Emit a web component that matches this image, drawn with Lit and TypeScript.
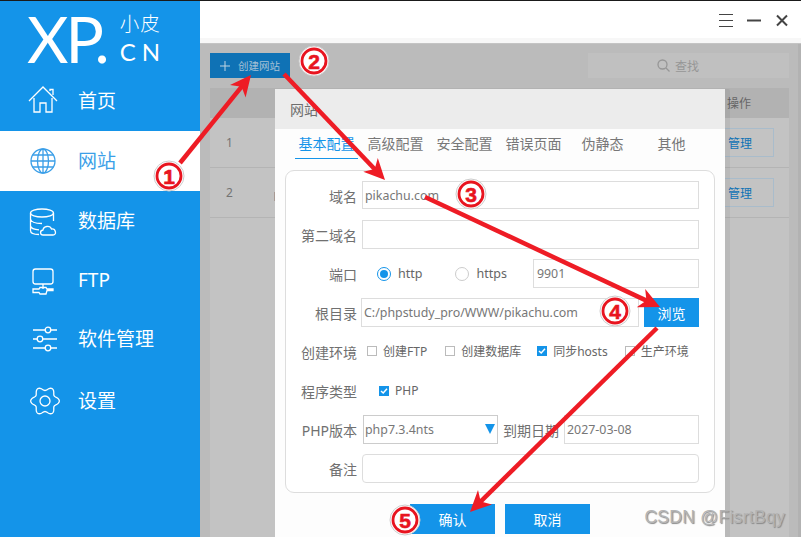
import { LitElement, html, css, svg } from "lit";
import { customElement } from "lit/decorators.js";

const gearPath = (() => {
  const pts: string[] = [];
  for (let i = 0; i < 120; i++) {
    const t = (i / 120) * Math.PI * 2;
    const r = 12.4 + 1.9 * Math.cos(6 * t);
    pts.push(`${(17 + r * Math.cos(t)).toFixed(2)} ${(15 + r * Math.sin(t)).toFixed(2)}`);
  }
  return "M" + pts.join("L") + "Z";
})();

const icons: Record<string, unknown> = {
  home: svg`<path d="M1 15 15 1 29 15M22 5V3.500h3V9M6 12V26H12V17H18V26H24V12"/>`,
  globe: svg`<circle cx="15" cy="15" r="12"/><ellipse cx="15" cy="15" rx="5.500" ry="12"/><path d="M15 3V27M3 15H27M4.500 9H25.500M4.500 21H25.500"/>`,
  db: svg`<ellipse cx="14" cy="7" rx="11.500" ry="4"/><path d="M2.500 7V24.500C2.500 27 6 28.500 11 28.500M25.500 7V15M2.500 13C3 16 8 17.500 14 17.500M2.500 20C3 22.500 6 23.500 11 23.800M15 29C12 29 11.500 24.500 15 24C15.500 20 22 19 23.500 23C28 22.500 29 29 25 29Z"/>`,
  ftp: svg`<rect x="5" y="3" width="20" height="15" rx="2.500"/><path d="M15 18V23M5 23H11L12 21.500H18L19 23H25V24.500H19L18 28H12L11 26.500H5Z"/>`,
  sliders: svg`<path d="M5 6H17.500M22.500 6H29M5 15H9.500M14.500 15H29M5 24H17.500M22.500 24H29"/><circle cx="20" cy="6" r="2.800"/><circle cx="12" cy="15" r="2.800"/><circle cx="20" cy="24" r="2.800"/>`,
  gear: svg`<path d="${gearPath}"/><circle cx="17" cy="15" r="5"/>`,
};

const nav = [
  ["home", "首页", false],
  ["globe", "网站", true],
  ["db", "数据库", false],
  ["ftp", "FTP", false],
  ["sliders", "软件管理", false],
  ["gear", "设置", false],
] as const;

const tabs = ["基本配置", "高级配置", "安全配置", "错误页面", "伪静态", "其他"];

const arrows = [
  [180, 163, 251, 75],
  [284, 74, 385, 180],
  [425, 197, 660, 307],
  [657, 328, 470, 512],
];

const badges = [
  [169, 176, "1"],
  [314, 61, "2"],
  [471, 194, "3"],
  [615, 311, "4"],
  [405, 520, "5"],
] as const;

function arrow(x1: number, y1: number, x2: number, y2: number) {
  const a = Math.atan2(y2 - y1, x2 - x1);
  const ca = Math.cos(a);
  const sa = Math.sin(a);
  const p = (back: number, side: number) =>
    `${(x2 - back * ca - side * sa).toFixed(1)},${(y2 - back * sa + side * ca).toFixed(1)}`;
  return svg`<line x1=${x1} y1=${y1} x2=${x2 - 12 * ca} y2=${y2 - 12 * sa} class="shaft"/>
    <polygon class="head" points="${x2},${y2} ${p(21, 10)} ${p(15, 0)} ${p(21, -10)}"/>`;
}

@customElement("app-root")
export class AppRoot extends LitElement {
  static styles = css`
    :host { display: block; width: 801px; height: 537px; font-family: "Noto Sans", "Noto Sans CJK SC", sans-serif; }
    * { box-sizing: border-box; }
    .window { position: relative; width: 801px; height: 537px; overflow: hidden; border-top: 1px solid #1a1a1a; display: flex; background: #fff; }

    .side { width: 200px; flex: none; background: #1494e9; color: #fff; }
    .logo { height: 70px; display: flex; padding-left: 27px; }
    .xp { font-family: Lato, sans-serif; font-weight: 400; font-size: 64px; line-height: 76px; height: 70px; letter-spacing: -3px; }
    .logo-side { margin: 9px 0 0 13px; display: flex; flex-direction: column; }
    .logo-cn { font-size: 19.500px; line-height: 26px; letter-spacing: 1px; font-family: "Noto Sans CJK SC", sans-serif; font-weight: 300; }
    .logo-en { font-family: Lato, sans-serif; font-weight: 400; font-size: 24px; line-height: 30px; letter-spacing: 6px; margin-top: 1px; }
    .nav { display: flex; align-items: center; height: 60px; padding-left: 28px; gap: 20px; font-size: 19px; }
    .nav.fifth { height: 56px; }
    .nav.sixth { height: 68px; }
    .nav span { padding-bottom: 2px; }
    .nav svg { width: 30px; height: 30px; fill: none; stroke: currentColor; stroke-width: 1.300; flex: none; overflow: visible; }
    .nav.on { background: #fff; color: #3b9fe8; }

    .main { flex: 1; display: flex; flex-direction: column; min-width: 0; }
    .top { height: 43px; flex: none; background: linear-gradient(#fff 37px, #f7f7f7 37px); border-bottom: 1px solid #c4c4c4; display: flex; align-items: flex-start; justify-content: flex-end; padding: 13px 12px 0 0; gap: 14px; }
    .top svg { width: 14px; height: 13px; stroke: #444; fill: none; display: block; }
    .content { flex: 1; background: #bbb; padding: 9px 9px 0 10px; border-right: 3px solid #b2b2b2; display: flex; flex-direction: column; }
    .tools { display: flex; justify-content: space-between; height: 25px; flex: none; }
    .create { width: 80px; background: #0f72b5; color: #a5c1d6; font-size: 10.500px; display: flex; align-items: center; padding-left: 10px; gap: 8px; }
    .create svg { width: 10px; height: 10px; stroke: #c0d4e2; stroke-width: 1; flex: none; }
    .find { width: 201px; background: #c0c0c0; color: #969696; font-size: 12px; display: flex; align-items: center; padding-left: 69px; gap: 5px; }
    .find svg { width: 13px; height: 13px; fill: none; stroke: #969696; stroke-width: 1.300; }
    .table { margin-top: 10px; flex: 1; background: #c3c3c3; color: #747474; font-size: 12px; }
    .thead { height: 30px; background: #b2b2b2; display: flex; align-items: center; justify-content: flex-end; padding-right: 38px; color: #666; font-size: 12px; }
    .tr { height: 50px; border-bottom: 1px solid #b4b4b4; display: flex; align-items: center; justify-content: space-between; padding: 0 15px 0 16px; }
    .tr:first-of-type { height: 49px; }
    .cell { display: flex; align-items: center; gap: 41px; }
    .tick { width: 1px; height: 9px; background: #a89a94; margin-top: 8px; }
    .manage { width: 68px; height: 29px; border: 1px solid #a9bccb; color: #0f72b5; display: flex; align-items: center; justify-content: center; }

    .dialog { position: absolute; left: 275px; top: 88px; width: 450px; height: 448px; background: #fdfdfd; box-shadow: 5px 0 0 rgba(0, 0, 0, 0.05); border-radius: 2px 2px 0 0; color: #666; display: flex; flex-direction: column; }
    .dhead { height: 40px; flex: none; background: #ececec; display: flex; align-items: center; padding-left: 15px; font-size: 14px; color: #6e6e6e; }
    .tabs { display: flex; height: 29.500px; padding-left: 20px; gap: 6px; flex: none; font-size: 14px; }
    .tab { width: 63px; display: flex; align-items: center; justify-content: center; color: #777; border-bottom: 1.500px solid transparent; }
    .tab.on { color: #1494e9; border-bottom-color: #1494e9; }
    .card { margin: 11.500px 10px 0; height: 323px; flex: none; border: 1px solid #ddd; border-radius: 9px; padding: 10px 15px 9px 0; display: flex; flex-direction: column; gap: 10px; background: #fff; }
    .row { height: 29px; flex: none; display: flex; align-items: center; font-size: 14px; }
    .lab { width: 71px; flex: none; text-align: right; color: #707070; margin-right: 5px; }
    .lab.root { margin-right: 4px; }
    .inp { height: 29px; border: 1px solid #ddd; flex: 1; min-width: 0; display: flex; align-items: center; padding-left: 2px; font-size: 12.400px; color: #777; background: #fff; }
    .inp.round { border-radius: 4px; }
    .inp.first { height: 28px; margin-bottom: 1px; }
    .inp.port-inp { margin-left: 26px; padding-left: 3px; }
    .browse { width: 55px; height: 29px; margin-left: 5px; flex: none; background: #1494e9; color: #fff; display: flex; align-items: center; justify-content: center; font-size: 14px; }
    .radio { width: 14px; height: 14px; border-radius: 50%; border: 1px solid #ccc; flex: none; display: flex; align-items: center; justify-content: center; background: #fff; }
    .radio.on { border-color: #1494e9; }
    .radio.on::after { content: ""; width: 8px; height: 8px; border-radius: 50%; background: #1494e9; }
    .opt { display: flex; align-items: center; gap: 7px; color: #666; font-size: 12.500px; }
    .opt.a { margin-left: 15px; }
    .opt.b { margin-left: 33px; }
    .chk { display: flex; align-items: center; gap: 6px; font-size: 12px; color: #666; margin-top: -2px; }
    .chk.c1 { margin-left: 5px; }
    .chk.c2 { margin-left: 18px; }
    .chk.c3 { margin-left: 16px; }
    .chk.c4 { margin-left: 17px; }
    .chk.php { margin-left: 17px; margin-top: 0; }
    .box { width: 10px; height: 10px; border: 1px solid #bbb; flex: none; background: #fff; display: block; }
    .box.on { background: #1494e9; border-color: #1494e9; }
    .box svg { display: block; width: 8px; height: 8px; fill: none; stroke: #fff; stroke-width: 1.500; }
    .select { width: 135px; height: 29px; margin-left: 1px; flex: none; border: 1px solid #ccc; display: flex; align-items: center; justify-content: space-between; padding: 0 2px 0 1px; font-size: 12.400px; color: #777; }
    .tri { width: 0; height: 0; border-left: 5.500px solid transparent; border-right: 5.500px solid transparent; border-top: 10px solid #1494e9; margin-top: -2px; }
    .due { margin: 0 5px; color: #707070; }
    .btns { display: flex; justify-content: center; gap: 10px; margin-top: 11px; }
    .btn { width: 85px; height: 30px; background: #1494e9; color: #fff; display: flex; align-items: center; justify-content: center; font-size: 14px; }
    .mark { position: absolute; right: 16px; bottom: 9px; font-family: "Liberation Sans", sans-serif; font-size: 17.500px; color: #b4b4b4; text-shadow: 1px 1px 1px #888; letter-spacing: 0.300px; }

    .over { position: absolute; left: 0; top: -1px; width: 801px; height: 537px; pointer-events: none; }
    .shaft { stroke: #ee1c25; stroke-width: 4.500; }
    .head { fill: #ee1c25; }
    .halo { fill: #fff; stroke: #ccc; stroke-width: 1; }
    .ring { fill: #fff; stroke: #e8141f; stroke-width: 2.800; }
    .num { fill: #e8141f; stroke: #e8141f; stroke-width: 0.600; font-family: "Liberation Sans", sans-serif; font-weight: 700; font-size: 21px; text-anchor: middle; }
  `;

  private check() {
    return html`<svg viewBox="0 0 8 8"><path d="M1 4 3.200 6 7 1.800"/></svg>`;
  }

  render() {
    return html`
      <div class="window">
        <aside class="side">
          <div class="logo">
            <div class="xp">XP.</div>
            <div class="logo-side"><span class="logo-cn">小皮</span><span class="logo-en">CN</span></div>
          </div>
          ${nav.map(
            ([icon, label, on], i) => html`<div class="nav ${on ? "on" : ""} ${i === 4 ? "fifth" : i === 5 ? "sixth" : ""}">
              <svg viewBox="0 0 30 30">${icons[icon]}</svg><span>${label}</span>
            </div>`
          )}
        </aside>
        <section class="main">
          <header class="top">
            <svg viewBox="0 0 14 13"><path d="M0 .5H14M0 6.500H14M0 12.500H14"/></svg>
            <svg viewBox="0 0 14 13"><path d="M0 6.500H14" stroke-width="2"/></svg>
            <svg viewBox="0 0 14 13"><path d="M2 1.500 12 11.500M12 1.500 2 11.500" stroke-width="2"/></svg>
          </header>
          <div class="content">
            <div class="tools">
              <div class="create"><svg viewBox="0 0 10 10"><path d="M5 0V10M0 5H10"/></svg><span>创建网站</span></div>
              <div class="find"><svg viewBox="0 0 13 13"><circle cx="5.500" cy="5.500" r="4.500"/><path d="M9 9l3.500 3.500"/></svg><span>查找</span></div>
            </div>
            <div class="table">
              <div class="thead">操作</div>
              <div class="tr"><span>1</span><span class="manage">管理</span></div>
              <div class="tr"><span class="cell"><span>2</span><i class="tick"></i></span><span class="manage">管理</span></div>
            </div>
          </div>
        </section>

        <div class="dialog">
          <div class="dhead">网站</div>
          <div class="tabs">
            ${tabs.map((t, i) => html`<div class="tab ${i === 0 ? "on" : ""}">${t}</div>`)}
          </div>
          <div class="card">
            <div class="row"><span class="lab">域名</span><div class="inp first">pikachu.com</div></div>
            <div class="row"><span class="lab">第二域名</span><div class="inp"></div></div>
            <div class="row">
              <span class="lab">端口</span>
              <label class="opt a"><span class="radio on"></span>http</label>
              <label class="opt b"><span class="radio"></span>https</label>
              <div class="inp port-inp">9901</div>
            </div>
            <div class="row">
              <span class="lab root">根目录</span>
              <div class="inp">C:/phpstudy_pro/WWW/pikachu.com</div>
              <div class="browse">浏览</div>
            </div>
            <div class="row">
              <span class="lab">创建环境</span>
              <label class="chk c1"><span class="box"></span>创建FTP</label>
              <label class="chk c2"><span class="box"></span>创建数据库</label>
              <label class="chk c3"><span class="box on">${this.check()}</span>同步hosts</label>
              <label class="chk c4"><span class="box"></span>生产环境</label>
            </div>
            <div class="row">
              <span class="lab">程序类型</span>
              <label class="chk php"><span class="box on">${this.check()}</span>PHP</label>
            </div>
            <div class="row">
              <span class="lab">PHP版本</span>
              <div class="select"><span>php7.3.4nts</span><span class="tri"></span></div>
              <span class="due">到期日期</span>
              <div class="inp">2027-03-08</div>
            </div>
            <div class="row"><span class="lab">备注</span><div class="inp round"></div></div>
          </div>
          <div class="btns"><div class="btn">确认</div><div class="btn">取消</div></div>
        </div>

        <div class="mark">CSDN @FisrtBqy</div>

        <svg class="over" viewBox="0 0 801 537">
          ${arrows.map(([a, b, c, d]) => arrow(a, b, c, d))}
          ${badges.map(
            ([x, y, n]) => svg`<circle class="halo" cx=${x} cy=${y} r="15"/>
              <circle class="ring" cx=${x} cy=${y} r="12"/>
              <text class="num" x=${x} y=${y + 7.5}>${n}</text>`
          )}
        </svg>
      </div>
    `;
  }
}
